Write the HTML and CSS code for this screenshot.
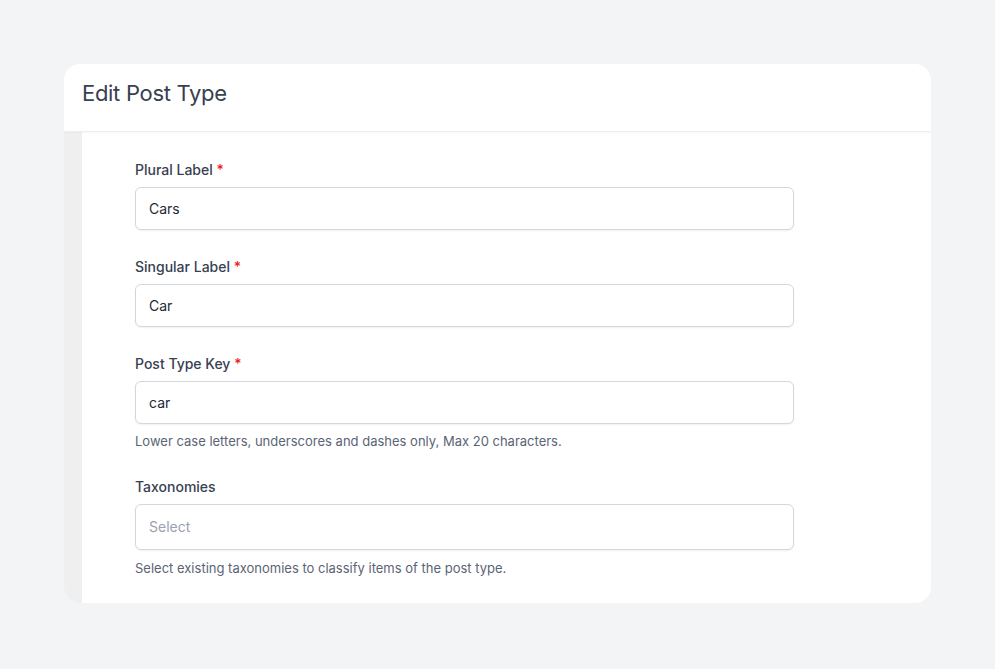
FILE: index.html
```html
<!DOCTYPE html>
<html lang="en">
<head>
    <meta charset="UTF-8">
    <title>Edit Post Type</title>
    <link rel="stylesheet" href="styles.css">
</head>
<body>

    <div class="card">
        <div class="card-header">
            <h2>Edit Post Type</h2>
        </div>

        <div class="card-body">
            <div class="strip"></div>

            <form class="form">
                <div class="field">
                    <label for="plural">Plural Label <span class="req">*</span></label>
                    <input id="plural" type="text" value="Cars">
                </div>

                <div class="field">
                    <label for="singular">Singular Label <span class="req">*</span></label>
                    <input id="singular" type="text" value="Car">
                </div>

                <div class="field">
                    <label for="key">Post Type Key <span class="req">*</span></label>
                    <input id="key" type="text" value="car">
                    <p class="help">Lower case letters, underscores and dashes only, Max 20 characters.</p>
                </div>

                <div class="field">
                    <label>Taxonomies</label>
                    <div class="select">Select</div>
                    <p class="help help-wide">Select existing taxonomies to classify items of the post type.</p>
                </div>
            </form>
        </div>
    </div>

</body>
</html>
```

FILE: styles.css
```css
body {
    margin: 0;
    padding: 64px 64px 0 64px;
    font-family: Inter, "Noto Sans", sans-serif;
    background-color: #f3f4f6;
    color: #374151;
}

.card {
    width: 867px;
    background-color: #fff;
    border-radius: 16px;
    overflow: hidden;
}

.card-header {
    position: relative;
    height: 67px;
    padding: 0 18px;
    display: flex;
    align-items: center;
    border-bottom: 1px solid #eceef1;
    box-shadow: 0 1px 2px rgba(0, 0, 0, 0.03);
}

.card-header h2 {
    margin: 0 0 10px 0;
    font-size: 22px;
    font-weight: 400;
    color: #374151;
    letter-spacing: -0.3px;
}

.card-body {
    display: flex;
}

.strip {
    width: 18px;
    background-color: #efeff0;
}

.form {
    padding: 28px 0 26px 53px;
}

.field {
    margin-bottom: 27px;
}

.field:last-child {
    margin-bottom: 0;
}

label {
    display: block;
    font-size: 14px;
    font-weight: 500;
    line-height: 20px;
    color: #374151;
    margin-bottom: 7px;
}

.req {
    color: #ef1c1c;
}

input,
.select {
    box-sizing: border-box;
    display: block;
    width: 659px;
    height: 43px;
    padding: 0 13px;
    font-family: inherit;
    font-size: 14px;
    color: #1f2937;
    background-color: #fff;
    border: 1px solid #d4d6de;
    border-radius: 6px;
    box-shadow: 0 1px 2px rgba(0, 0, 0, 0.06);
    outline: none;
}

.select {
    height: 46px;
    line-height: 44px;
    color: #9aa1b0;
}

.help {
    margin: 8px 0 0 0;
    font-size: 13px;
    line-height: 18px;
    color: #5b6474;
}

.help-wide {
    margin-top: 9px;
}
```
